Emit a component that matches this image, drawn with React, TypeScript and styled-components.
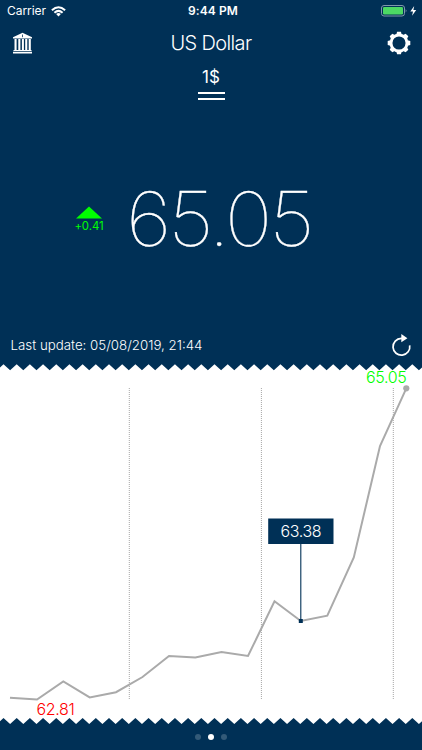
import React from "react";
import styled, { createGlobalStyle } from "styled-components";

const navy = "#003056";
const up = "#00ff00";

const GlobalStyle = createGlobalStyle`
  * { box-sizing: border-box; }
  body { margin: 0; background: ${navy}; }
`;

const Screen = styled.main`
  width: 422px;
  height: 750px;
  overflow: hidden;
  display: flex;
  flex-direction: column;
  background: ${navy};
  color: #fff;
  font-family: Inter, "Liberation Sans", sans-serif;
`;

const StatusBar = styled.div`
  height: 22px;
  flex: none;
  display: grid;
  grid-template-columns: 1fr auto 1fr;
  align-items: center;
  padding: 0 5px 0 7px;
  font-size: 12px;
  line-height: 22px;
`;

const Carrier = styled.div`
  display: flex;
  align-items: center;
  gap: 5px;
  letter-spacing: -0.05px;
`;

const Clock = styled.div`
  font-weight: 600;
  letter-spacing: 0.1px;
  padding-left: 2px;
`;

const Power = styled.div`
  display: flex;
  justify-content: flex-end;
  align-items: center;
`;

const Header = styled.header`
  height: 42px;
  flex: none;
  display: grid;
  grid-template-columns: 1fr auto 1fr;
  align-items: center;
  padding: 0 11px 0 12px;
`;

const IconButton = styled.button<{ $end?: boolean }>`
  display: flex;
  padding: 0;
  border: 0;
  background: none;
  color: inherit;
  justify-self: ${(p) => (p.$end ? "end" : "start")};
`;

const Title = styled.h1`
  margin: 0;
  font-size: 20px;
  font-weight: 300;
  line-height: 42px;
  letter-spacing: -0.65px;
  padding-right: 1px;
`;

const Unit = styled.div`
  height: 37px;
  flex: none;
  display: flex;
  flex-direction: column;
  align-items: center;
  font-size: 17px;
  line-height: 26px;
`;

const EqualBars = styled.div`
  width: 27px;
  height: 8px;
  margin-top: 2px;
  border: solid #fff;
  border-width: 2px 0;
`;

const Rate = styled.section`
  height: 228px;
  flex: none;
  display: flex;
  align-items: center;
  padding: 0 0 0 74px;
  gap: 21.5px;
`;

const Change = styled.div`
  width: 30px;
  display: flex;
  flex-direction: column;
  align-items: center;
  color: ${up};
  font-size: 11.4px;
  line-height: 14px;
  letter-spacing: -0.05px;
  padding-top: 9px;
  white-space: nowrap;
`;

const Amount = styled.div`
  font-size: 75px;
  font-weight: 100;
  font-optical-sizing: none;
  font-variation-settings: "opsz" 14;
  line-height: 90px;
  letter-spacing: -3px;
  padding-top: 8px;
  transform: scaleX(1.075);
  transform-origin: left;
  -webkit-text-stroke: 0.3px #fff;
`;

const UpdateRow = styled.div`
  height: 35px;
  flex: none;
  display: flex;
  justify-content: space-between;
  padding: 3.5px 10px 0 10.5px;
  font-size: 13.3px;
  font-weight: 300;
  line-height: 24px;
`;

const Chart = styled.svg`
  width: 422px;
  height: 360px;
  flex: none;
  display: block;
`;

const ChartLabel = styled.text<{ $tone: string }>`
  fill: ${(p) => p.$tone};
  font-size: 16px;
  font-weight: 300;
  letter-spacing: -0.35px;
`;

const Pager = styled.nav`
  height: 26px;
  display: flex;
  justify-content: center;
  align-items: center;
  gap: 7px;
`;

const Dot = styled.span<{ $active?: boolean }>`
  width: 6px;
  height: 6px;
  border-radius: 50%;
  background: ${(p) => (p.$active ? "#fff" : "#335a78")};
`;

const WifiIcon = () => (
  <svg width="15" height="11" viewBox="0 0 15 11" fill="none" stroke="#fff" strokeWidth="2">
    <path d="M0.9 4.2Q7.5 -1.7 14.1 4.2M3.4 6.7Q7.5 3.1 11.6 6.7" />
    <path d="M5.1 8Q7.5 6.2 9.9 8L7.5 10.5Z" fill="#fff" stroke="none" />
  </svg>
);

const BatteryIcon = () => (
  <svg width="36" height="12" viewBox="0 0 36 12">
    <rect x="0.5" y="0.5" width="23" height="10.5" rx="2.5" fill="none" stroke="#7f98ab" />
    <rect x="2" y="2" width="20" height="7.5" rx="1.3" fill="#4cd964" />
    <path d="M24.7 4Q26.5 5.7 24.7 7.5Z" fill="#7f98ab" />
    <path d="M33.2 1L29.3 6.4H32L31.1 10.7L35.2 5.1H32.4Z" fill="#fff" />
  </svg>
);

const BankIcon = () => (
  <svg width="21" height="22" viewBox="0 0 21 22" fill="#fff">
    <path d="M10.5 0.7L20 5.2V6.6H1V5.2Z" />
    <path d="M2.5 7H4.6V18H2.5ZM6.3 7H8.4V18H6.3ZM9.9 7H11.9V18H9.9ZM13.2 7H15.3V18H13.2ZM16.7 7H18.8V18H16.7ZM1.5 18H19.5V19H1.5ZM1 19.8H20V21.5H1Z" />
    <path d="M10.5 2.5V5.2" stroke={navy} strokeWidth="0.8" />
  </svg>
);

const teeth = [0, 45, 90, 135, 180, 225, 270, 315];
const GearIcon = () => (
  <svg width="24" height="24" viewBox="-12 -12 24 24">
    <circle r="8" fill="none" stroke="#fff" strokeWidth="2.9" />
    {teeth.map((a) => (
      <path key={a} d="M-2.7 -8.6L-1.9 -11.3H1.9L2.7 -8.6Z" fill="#fff" transform={`rotate(${a})`} />
    ))}
  </svg>
);

const RefreshIcon = () => (
  <svg width="21" height="24" viewBox="0 0 21 24">
    <path d="M18.7 12.4A8.4 8.4 0 1 1 10.3 5.4H13" fill="none" stroke="#fff" strokeWidth="1.7" />
    <path d="M10.3 1V9.2L16.4 5.3Z" fill="#fff" />
  </svg>
);

const period = 422 / 32;
const edge = Array.from({ length: 34 }, (_, i) => 3.5 + (i - 1) * period);
const topEdge = edge.map((x) => `${x},0.3 ${x + period / 2},6.3`).join(" ");
const bottomEdge = edge.map((x) => `${x},354 ${x + period / 2},360`).reverse();
const bottomPoints = bottomEdge.map((pair) => pair.split(" ").reverse().join(" ")).join(" ");

const series = [
  [10, 333.7], [37, 335.6], [63.3, 317.4], [89.7, 333.4], [116, 328.2], [142.5, 313],
  [169, 292], [195.3, 293.5], [221.5, 288], [248, 292], [274.5, 237.3], [300.8, 257],
  [327.3, 251.7], [353.8, 193.5], [380, 82], [406.3, 24.3],
];

const RateChart = () => (
  <Chart viewBox="0 0 422 360">
    <polygon points={`${topEdge} ${bottomPoints}`} fill="#fff" />
    {[129.3, 261.4, 393.3].map((x) => (
      <line key={x} x1={x} x2={x} y1="24" y2="336" stroke="#a6a6a6" strokeDasharray="1 1" />
    ))}
    <polyline points={series.map((p) => p.join(",")).join(" ")} fill="none" stroke="#aaa" strokeWidth="2" />
    <circle cx="406.3" cy="24.3" r="3.1" fill="#aaa" />
    <line x1="300.8" x2="300.8" y1="180" y2="257" stroke={navy} strokeWidth="1.1" />
    <rect x="298.8" y="255" width="4" height="4" fill={navy} />
    <rect x="268.2" y="154.5" width="65.3" height="25.5" fill={navy} />
    <ChartLabel $tone="#fff" x="300.8" y="173.3" textAnchor="middle">63.38</ChartLabel>
    <ChartLabel $tone={up} x="366" y="19">65.05</ChartLabel>
    <ChartLabel $tone="#ff0000" x="36.5" y="350.8">62.81</ChartLabel>
  </Chart>
);

export default function App() {
  return (
    <Screen>
      <GlobalStyle />
      <StatusBar>
        <Carrier>Carrier <WifiIcon /></Carrier>
        <Clock>9:44 PM</Clock>
        <Power><BatteryIcon /></Power>
      </StatusBar>
      <Header>
        <IconButton aria-label="Banks"><BankIcon /></IconButton>
        <Title>US Dollar</Title>
        <IconButton aria-label="Settings" $end><GearIcon /></IconButton>
      </Header>
      <Unit>
        <span>1$</span>
        <EqualBars />
      </Unit>
      <Rate>
        <Change>
          <svg width="26" height="13" viewBox="0 0 26 13">
            <path d="M13 0.5L26 12.5H0Z" fill={up} />
          </svg>
          <span>+0.41</span>
        </Change>
        <Amount>65.05</Amount>
      </Rate>
      <UpdateRow>
        <span>Last update: 05/08/2019, 21:44</span>
        <IconButton aria-label="Refresh" $end><RefreshIcon /></IconButton>
      </UpdateRow>
      <RateChart />
      <Pager>
        <Dot />
        <Dot $active />
        <Dot />
      </Pager>
    </Screen>
  );
}
